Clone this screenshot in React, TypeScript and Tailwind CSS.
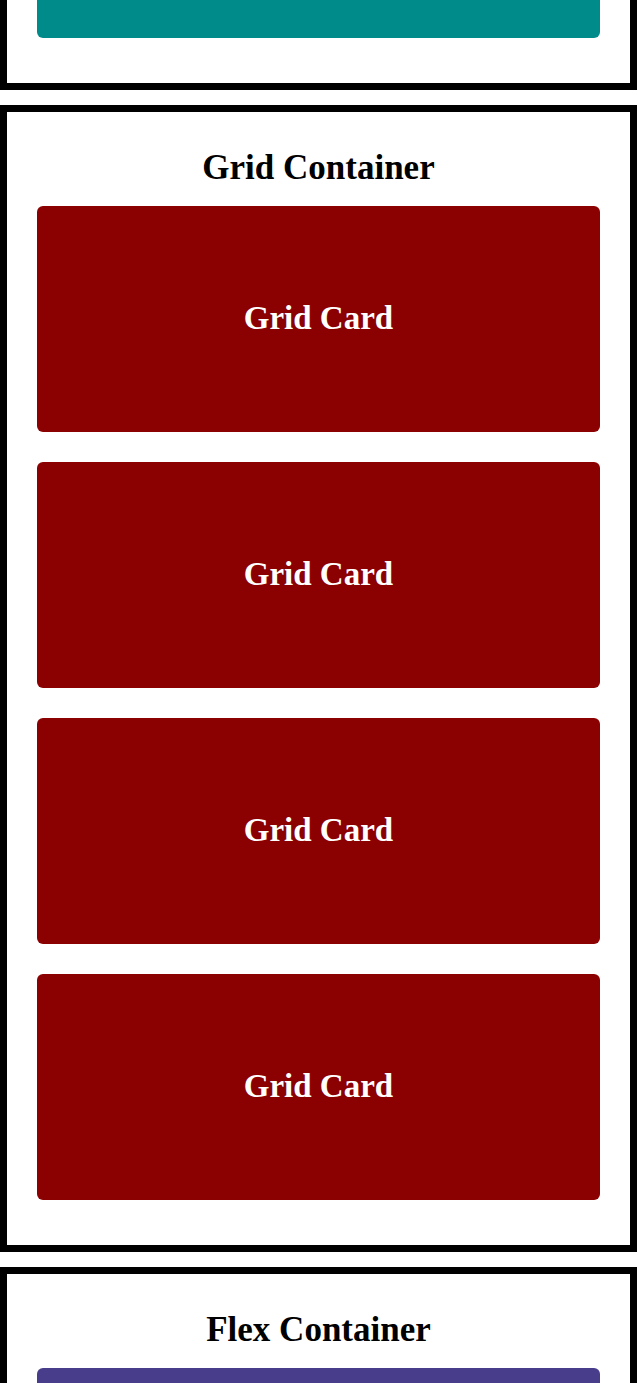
const cards = ['Grid Card', 'Grid Card', 'Grid Card', 'Grid Card']

export default function App() {
  return (
    <div className="w-[637px] bg-white font-['Liberation_Serif',serif] text-black">
      {/* tail of the previous section, scrolled past */}
      <section className="border-x-[7px] border-b-[7px] border-black px-[30px] pb-[45px]">
        <div className="h-[38px] rounded-b-md bg-[#008b8b]" />
      </section>

      <section className="mt-[15px] border-[7px] border-black px-[30px] pt-[36px] pb-[45px]">
        <h2 className="mb-[18px] text-center text-[35px] font-bold leading-[40px]">Grid Container</h2>
        <div className="grid grid-cols-1 gap-[30px]">
          {cards.map((label, i) => (
            <div
              key={i}
              className="flex h-[226px] items-center justify-center rounded-md bg-[#8b0000] text-[33px] font-bold text-white"
            >
              {label}
            </div>
          ))}
        </div>
      </section>

      <section className="mt-[15px] border-[7px] border-black px-[30px] pt-[36px] pb-[45px]">
        <h2 className="mb-[18px] text-center text-[35px] font-bold leading-[40px]">Flex Container</h2>
        <div className="flex flex-col gap-[30px]">
          <div className="h-[226px] rounded-md bg-[#483d8b]" />
        </div>
      </section>
    </div>
  )
}
